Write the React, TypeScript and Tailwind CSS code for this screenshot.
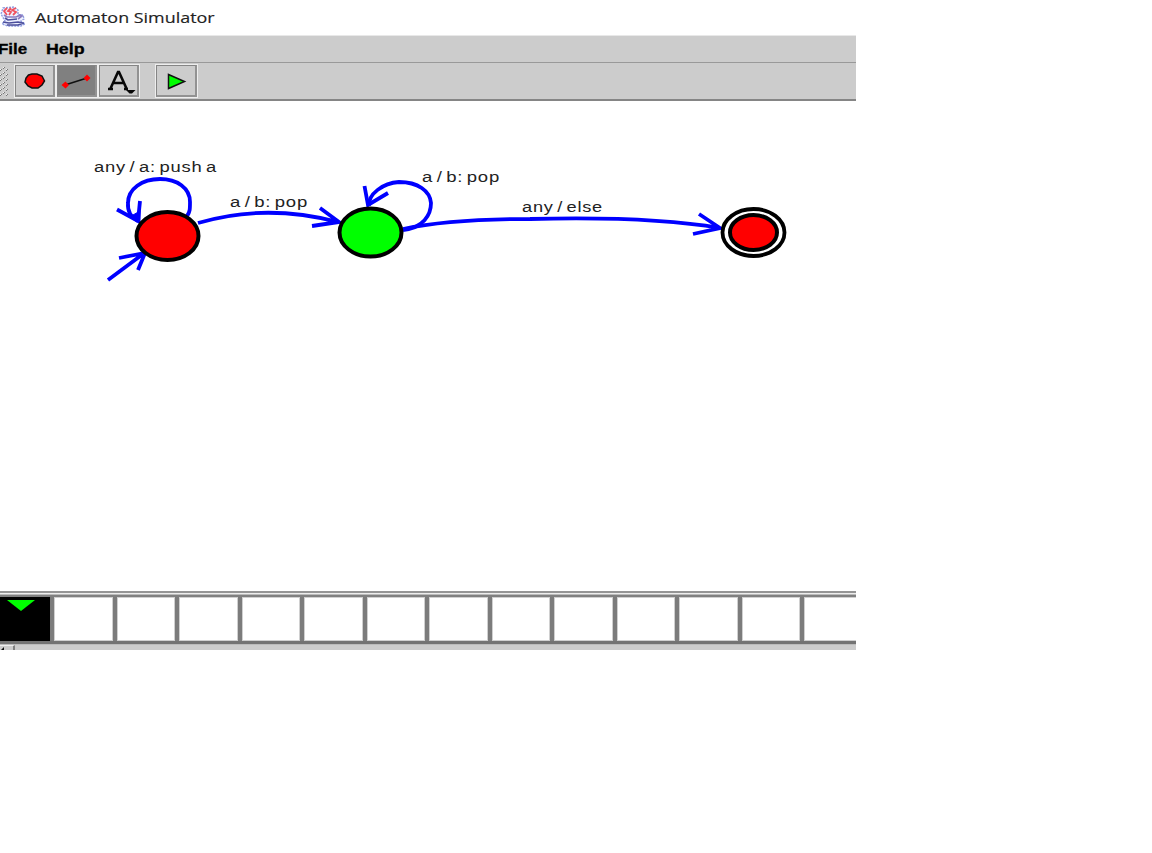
import React from "react";

function JavaCupIcon() {
  return (
    <svg className="h-[22px] w-[26px] shrink-0" viewBox="0 0 26 22" fill="none">
      <path d="M3 2 L14 1 L18 4 L18 9 L23 9 L24 13 L21 15 L25 18 L21 20 L8 20 L2 18 L5 15 L1 8 Z" fill="#eef1ff" stroke="#8f9de0" strokeWidth="1.4" strokeDasharray="2 1" />
      <path d="M7 2 L4 5 L7 9 M11 2 L8 5 L11 6 L9 9 M16 2 L12 4 L16 6 L13 9" stroke="#f0525e" strokeWidth="1.8" />
      <path d="M4 9 L7 11 L16 11 L21 9 M19 9 L22 10 L18 13" stroke="#8a7cc0" strokeWidth="1.6" />
      <path d="M5 12 L8 14 L17 13 M3 16 L9 17 L18 16 L23 17 M7 19 L18 19 L24 17" stroke="#4c4f9c" strokeWidth="1.6" />
    </svg>
  );
}

function ToolButton({ active = false, children }: { active?: boolean; children: React.ReactNode }) {
  return (
    <button
      className={
        "h-[34px] w-[42.3px] shrink-0 border border-[#eeeeee] p-0 " + (active ? "bg-[#808080]" : "bg-[#cccccc]")
      }
    >
      <span className="block h-full w-full border-t border-l border-r-2 border-b-2 border-t-[#858585] border-l-[#858585] border-r-[#929292] border-b-[#929292]">
        <svg className="block h-[29px] w-[37px]" viewBox="0 0 37 29" fill="none">
          {children}
        </svg>
      </span>
    </button>
  );
}

function Toolbar() {
  return (
    <div className="flex h-[38px] items-start border-b-2 border-[#858585] bg-[#cccccc] pt-[1px]">
      <svg className="h-[34px] w-[13.5px] shrink-0" shapeRendering="crispEdges">
        <defs>
          <pattern id="grip" width="6" height="5" patternUnits="userSpaceOnUse">
            <path d="M0 1h1v1h-1zM1 0h1v1h-1zM3 4h1v1h-1zM4 3h1v1h-1z" fill="#777777" />
            <path d="M0 0h1v1h-1zM3 3h1v1h-1z" fill="#f4f4f4" />
          </pattern>
        </defs>
        <rect y="2" width="8" height="31" fill="url(#grip)" />
      </svg>
      <ToolButton>
        <path d="M12.500 9 L16 8 H21 L26 10 L28.500 15 L26 19 L22 22 H16 L12 20 L9 16 L10 12 Z" fill="#ff0000" stroke="#111" strokeWidth="1.5" />
      </ToolButton>
      <ToolButton active>
        <path d="M7 19 L29 12" stroke="#111" strokeWidth="1.6" />
        <path d="M3.500 19 L7.500 15.500 L11 19 L7.500 22.500 Z M25.500 12 L29 8.500 L32.500 12 L29 15.500 Z" fill="#ff0000" />
      </ToolButton>
      <ToolButton>
        <path d="M10.500 22.500 L18 6 H19 L26.500 22.500 M13 17 H24 M8 23 H13 M24 23 H28" stroke="#080808" strokeWidth="2.6" />
        <path d="M26 24 H35.500 L32 27.500 H29.500 Z" fill="#080808" />
      </ToolButton>
      <div className="w-[15px] shrink-0" />
      <ToolButton>
        <path d="M11.500 8.500 L27.500 15.500 L11.500 22.500 Z" fill="#00ff00" stroke="#111" strokeWidth="1.5" />
      </ToolButton>
    </div>
  );
}

function Label({ x, y, width, children }: { x: number; y: number; width: number; children: string }) {
  return (
    <text x={x} y={y} textLength={width} lengthAdjust="spacingAndGlyphs" className="fill-[#222222] font-['Liberation_Sans',sans-serif] text-[14px] tracking-[0.6px] [word-spacing:-1.8px]">
      {children}
    </text>
  );
}

function Diagram() {
  return (
    <svg className="block h-[490px] w-[856px] shrink-0" viewBox="0 101 856 490" fill="none">
      <g stroke="#0000ff" strokeWidth="3.8">
        <path d="M187 216 C190 212 190 209 190 202 C190 188 177 179 160 179 C142 179 128 189 128 203 Q127 215 138 221" />
        <path d="M117 209.500 L138 221 L140 201" />
        <path d="M108 280 L143 254 M119 258 L145 253 L138 270" />
        <path d="M133 215 L140 211 V223 Z" fill="#0000ff" strokeWidth="1" />
        <path d="M198 223 Q265 203 338 222 M320 208 L339 222 L312 226" />
        <path d="M403 230 C423 228 431 215 431 203 C430 191 418 182 399 182 C383 183 368 194 369 206" />
        <path d="M364.500 186 L368 205 L388 193" />
        <path d="M403 229 Q450 219 530 219 Q650 216 720 228 M699 214 L720 228 L693 234" />
      </g>
      <g stroke="#000000">
        <ellipse cx="167.500" cy="236" rx="31" ry="24" fill="#ff0000" strokeWidth="4" />
        <ellipse cx="370.500" cy="232.500" rx="31" ry="24" fill="#00ff00" strokeWidth="4" />
        <ellipse cx="753.500" cy="232.500" rx="31" ry="23.500" fill="#ffffff" strokeWidth="3.800" />
        <ellipse cx="753.500" cy="232.500" rx="23.500" ry="17.500" fill="#ff0000" strokeWidth="4" />
      </g>
      <Label x={94} y={172} width={123}>any / a: push a</Label>
      <Label x={230} y={206.5} width={78}>a / b: pop</Label>
      <Label x={422} y={181.5} width={78}>a / b: pop</Label>
      <Label x={522} y={211.5} width={81}>any / else</Label>
    </svg>
  );
}

function Tape() {
  return (
    <div className="flex h-[49px] shrink-0 border-t-2 border-b-[3px] border-t-[#808080] border-b-[#737373] bg-white">
      <div className="h-full w-[54px] shrink-0 border-r-4 border-[#7c7c7c] bg-black">
        <svg className="block h-[14px] w-[50px]">
          <path d="M7 3 H35 L21 14 Z" fill="#00ff00" />
        </svg>
      </div>
      {Array.from({ length: 13 }, (_, i) => (
        <div key={i} className="h-full w-[62.5px] shrink-0 border-r-4 border-[#7c7c7c] bg-white shadow-[inset_0_0_0_1px_#d0d0d0]" />
      ))}
    </div>
  );
}

export default function App() {
  return (
    <div className="h-[853px] w-full overflow-hidden bg-white">
      <main className="flex h-[650px] w-[856px] flex-col overflow-hidden bg-white">
        <header className="flex h-[35px] shrink-0 items-start pt-[6px] font-['Open_Sans',sans-serif] text-[#222222]">
          <JavaCupIcon />
          <h1 className="ml-[9px] origin-left scale-x-[1.235] text-[14.5px] leading-[23px] whitespace-nowrap [-webkit-text-stroke:0.15px_#222222]">Automaton Simulator</h1>
        </header>
        <nav className="flex h-[28px] shrink-0 items-center border-t border-b border-t-[#e8e8e8] border-b-[#999999] bg-[#cccccc] font-['Liberation_Sans',sans-serif] text-[14px] font-bold text-black [-webkit-text-stroke:0.3px_black]">
          <span className="-ml-[2px] w-[48px]"><span className="inline-block origin-left scale-x-[1.21]">File</span></span>
          <span className="inline-block origin-left scale-x-[1.27]">Help</span>
        </nav>
        <Toolbar />
        <Diagram />
        <div className="h-[4px] shrink-0 border-t-2 border-b border-t-[#959595] border-b-[#bbbbbb] bg-[#eeeeee]" />
        <Tape />
        <footer className="flex h-[6px] shrink-0 overflow-hidden border-t border-[#bbbbbb] bg-[#cccccc]">
          <div className="w-[15px] border-t border-r-2 border-t-[#eeeeee] border-r-[#808080]">
            <svg className="block h-[4px] w-[12px]"><path d="M1 4 L4 1 V4 Z" fill="#111111" /></svg>
          </div>
        </footer>
      </main>
    </div>
  );
}
